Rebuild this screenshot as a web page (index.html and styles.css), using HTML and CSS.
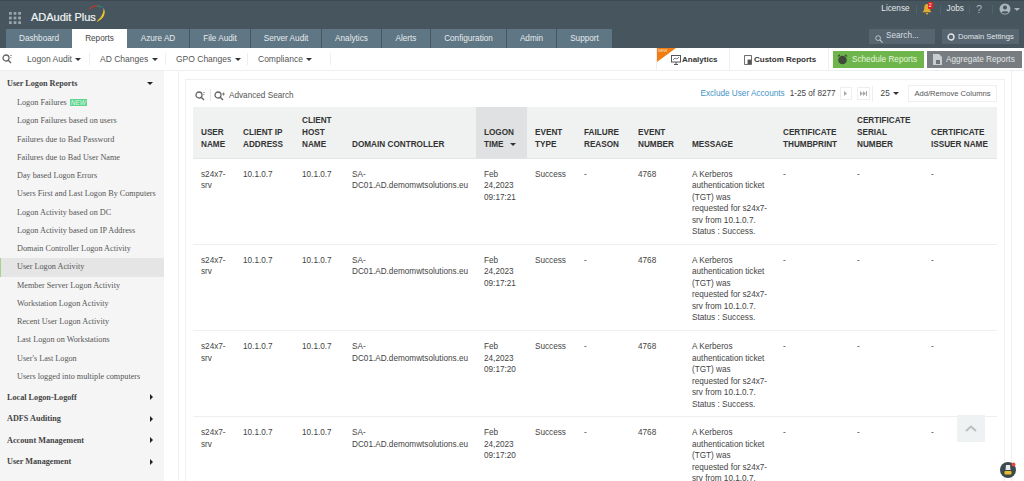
FILE: index.html
```html
<!DOCTYPE html>
<html lang="en">
<head>
<meta charset="utf-8">
<title>ADAudit Plus</title>
<link rel="stylesheet" href="styles.css">
</head>
<body>
<header class="top">
  <div class="brand-row">
    <svg class="grid-ic" width="12" height="12" viewBox="0 0 13 13"><g fill="#9aa5ab"><rect x="0" y="0" width="3" height="3"/><rect x="5" y="0" width="3" height="3"/><rect x="10" y="0" width="3" height="3"/><rect x="0" y="5" width="3" height="3"/><rect x="5" y="5" width="3" height="3"/><rect x="10" y="5" width="3" height="3"/><rect x="0" y="10" width="3" height="3"/><rect x="5" y="10" width="3" height="3"/><rect x="10" y="10" width="3" height="3"/></g></svg>
    <span class="logo">ADAudit Plus</span>
    <svg class="swoosh" width="19" height="18" viewBox="0 0 19 18"><path d="M1 4.500C3 2 6 .8 9 .8" stroke="#c0392b" stroke-width="1.200" fill="none"/><path d="M9 .8C10.500 .8 12 1.200 13 1.800" stroke="#2e8b57" stroke-width="1.200" fill="none"/><path d="M13 1.800C14 2.300 14.500 2.700 15 3.300" stroke="#2a6fb5" stroke-width="1.200" fill="none"/><path d="M15.500 3C19 8 15 15 8 17C12.500 13 15.800 9 15.500 3Z" fill="#eec32b"/></svg>
    <nav class="util">
      <span class="util-item">License</span>
      <span class="util-sep sep-a"></span>
      <span class="bell">
        <svg width="10" height="12" viewBox="0 0 11 13"><path d="M5.500 1C3 1 2.500 3 2.500 5.500C2.500 8 1.500 9 .5 10H10.500C9.500 9 8.500 8 8.500 5.500C8.500 3 8 1 5.500 1ZM4 11H7L5.500 13Z" fill="#e2a92f"/></svg>
        <span class="bell-count">2</span>
      </span>
      <span class="util-sep"></span>
      <span class="util-item">Jobs</span>
      <span class="util-sep sep-b"></span>
      <span class="util-help">?</span>
      <span class="util-sep"></span>
      <svg class="user-ic" width="12" height="12" viewBox="0 0 12 12"><circle cx="6" cy="6" r="5.500" fill="#aab4ba"/><circle cx="6" cy="4.600" r="2" fill="#46555e"/><path d="M2.500 9.500C3 7.800 9 7.800 9.500 9.500C8 11 4 11 2.500 9.500Z" fill="#46555e"/></svg>
      <span class="caret caret-light"></span>
    </nav>
  </div>
  <div class="tab-row">
    <nav class="tabs">
      <a class="tab t-dash">Dashboard</a>
      <a class="tab tab-on t-rep">Reports</a>
      <a class="tab t-az">Azure AD</a>
      <a class="tab t-file">File Audit</a>
      <a class="tab t-srv">Server Audit</a>
      <a class="tab t-an">Analytics</a>
      <a class="tab t-al">Alerts</a>
      <a class="tab t-conf">Configuration</a>
      <a class="tab t-adm">Admin</a>
      <a class="tab t-sup">Support</a>
    </nav>
    <div class="tools">
      <div class="search-box">
        <svg width="8" height="8" viewBox="0 0 9 9"><circle cx="3.500" cy="3.500" r="2.700" stroke="#c5ccd0" fill="none"/><path d="M5.500 5.500L8.500 8.500" stroke="#c5ccd0" stroke-width="1.200"/></svg>
        <span>Search...</span>
      </div>
      <div class="dom-set">
        <svg width="8" height="8" viewBox="0 0 9 9"><circle cx="4.500" cy="4.500" r="3.300" stroke="#e0e4e6" stroke-width="1.600" fill="none"/></svg>
        <span>Domain Settings</span>
      </div>
    </div>
  </div>
</header>

<div class="subnav">
  <svg class="sub-search" width="10" height="10" viewBox="0 0 10 10"><circle cx="4" cy="4" r="3" stroke="#666" stroke-width="1.300" fill="none"/><path d="M6 6L9 9" stroke="#666" stroke-width="1.400"/><path d="M8 1.500H10M8 3.500H9.500" stroke="#888" stroke-width=".7"/></svg>
  <a class="sub-item s1">Logon Audit <span class="caret"></span></a>
  <a class="sub-item s2">AD Changes <span class="caret"></span></a>
  <a class="sub-item s3">GPO Changes <span class="caret"></span></a>
  <a class="sub-item s4">Compliance <span class="caret"></span></a>
  <div class="sub-right">
    <div class="sub-link an-link">
      <span class="new-flag"><span>NEW</span></span>
      <svg width="10" height="10" viewBox="0 0 10 10"><rect x=".5" y=".5" width="9" height="6.500" fill="none" stroke="#555"/><path d="M2 5L4 3L6 4L8 2" stroke="#555" fill="none" stroke-width=".8"/><path d="M3 9.500H7M5 7V9.500" stroke="#555"/></svg>
      <span>Analytics</span>
    </div>
    <div class="sub-link cr-link">
      <svg width="8" height="10" viewBox="0 0 9 11"><path d="M.5.5H8.500V10.500H.5Z" fill="none" stroke="#555"/><rect x="4" y="5" width="4" height="5" fill="#555"/></svg>
      <span>Custom Reports</span>
    </div>
    <a class="act act-green">
      <svg width="11" height="11" viewBox="0 0 11 11"><circle cx="5.500" cy="6" r="4.300" fill="#3f4a3a"/><path d="M1 2.500L3 .8M10 2.500L8 .8" stroke="#3f4a3a" stroke-width="1.300"/></svg>
      <span>Schedule Reports</span>
    </a>
    <a class="act act-gray">
      <svg width="9" height="11" viewBox="0 0 9 11"><path d="M0 0H6L9 3V11H0Z" fill="#c8cdd0"/><rect x="3" y="6" width="4" height="4" fill="#6e7478"/></svg>
      <span>Aggregate Reports</span>
    </a>
  </div>
</div>

<div class="body-wrap">
  <aside class="side">
    <div class="grp grp-open"><span>User Logon Reports</span><span class="caret caret-dark"></span></div>
    <ul class="side-list">
      <li>Logon Failures <span class="new-tag">NEW</span></li>
      <li>Logon Failures based on users</li>
      <li>Failures due to Bad Password</li>
      <li>Failures due to Bad User Name</li>
      <li>Day based Logon Errors</li>
      <li>Users First and Last Logon By Computers</li>
      <li>Logon Activity based on DC</li>
      <li>Logon Activity based on IP Address</li>
      <li>Domain Controller Logon Activity</li>
      <li class="side-on">User Logon Activity</li>
      <li>Member Server Logon Activity</li>
      <li>Workstation Logon Activity</li>
      <li>Recent User Logon Activity</li>
      <li>Last Logon on Workstations</li>
      <li>User's Last Logon</li>
      <li>Users logged into multiple computers</li>
    </ul>
    <div class="grp"><span>Local Logon-Logoff</span><span class="caret-r"></span></div>
    <div class="grp"><span>ADFS Auditing</span><span class="caret-r"></span></div>
    <div class="grp"><span>Account Management</span><span class="caret-r"></span></div>
    <div class="grp"><span>User Management</span><span class="caret-r"></span></div>
  </aside>

  <main class="main">
    <section class="panel">
      <div class="toolbar">
        <svg class="tb-q" width="10" height="10" viewBox="0 0 10 10"><circle cx="4" cy="4" r="3" stroke="#666" stroke-width="1.300" fill="none"/><path d="M6 6L9 9" stroke="#666" stroke-width="1.400"/><path d="M8 1.500H10M8 3.500H9.500" stroke="#888" stroke-width=".7"/></svg>
        <span class="tb-sep"></span>
        <svg class="tb-adv" width="11" height="10" viewBox="0 0 11 10"><circle cx="4" cy="4" r="3" stroke="#666" stroke-width="1.300" fill="none"/><path d="M6 6L9 9" stroke="#666" stroke-width="1.400"/><path d="M8 3H11M9.500 1.500V4.500" stroke="#666" stroke-width=".8"/></svg>
        <span class="adv-text">Advanced Search</span>
        <div class="tb-right">
          <a class="excl">Exclude User Accounts</a>
          <span class="count">1-25 of 8277</span>
          <span class="pg"><svg width="5" height="5" viewBox="0 0 5 5"><path d="M1 0L4 2.500L1 5Z" fill="#aaa"/></svg></span>
          <span class="pg pg2"><svg width="7" height="5" viewBox="0 0 7 5"><path d="M0 0L3 2.500L0 5ZM3 0L6 2.500L3 5ZM6 0H7V5H6Z" fill="#aaa"/></svg></span>
          <span class="tb-sep2"></span>
          <span class="per">25 <span class="caret"></span></span>
          <a class="addrem">Add/Remove Columns</a>
        </div>
      </div>
      <table class="grid">
        <colgroup>
          <col class="c1"><col class="c2"><col class="c3"><col class="c4"><col class="c5"><col class="c6"><col class="c7"><col class="c8"><col class="c9"><col class="c10"><col class="c11"><col class="c12">
        </colgroup>
        <thead>
          <tr>
            <th>USER NAME</th><th>CLIENT IP ADDRESS</th><th>CLIENT HOST NAME</th><th>DOMAIN CONTROLLER</th>
            <th class="th-sort">LOGON TIME <span class="caret"></span></th>
            <th>EVENT TYPE</th><th>FAILURE REASON</th><th>EVENT NUMBER</th><th>MESSAGE</th>
            <th>CERTIFICATE THUMBPRINT</th><th>CERTIFICATE SERIAL NUMBER</th><th>CERTIFICATE ISSUER NAME</th>
          </tr>
        </thead>
        <tbody>
          <tr><td>s24x7-srv</td><td>10.1.0.7</td><td>10.1.0.7</td><td>SA-DC01.AD.demomwtsolutions.eu</td><td>Feb 24,2023 09:17:21</td><td>Success</td><td>-</td><td>4768</td><td class="msg">A Kerberos authentication ticket (TGT) was requested for s24x7-srv from 10.1.0.7. Status : Success.</td><td>-</td><td>-</td><td>-</td></tr>
          <tr><td>s24x7-srv</td><td>10.1.0.7</td><td>10.1.0.7</td><td>SA-DC01.AD.demomwtsolutions.eu</td><td>Feb 24,2023 09:17:21</td><td>Success</td><td>-</td><td>4768</td><td class="msg">A Kerberos authentication ticket (TGT) was requested for s24x7-srv from 10.1.0.7. Status : Success.</td><td>-</td><td>-</td><td>-</td></tr>
          <tr><td>s24x7-srv</td><td>10.1.0.7</td><td>10.1.0.7</td><td>SA-DC01.AD.demomwtsolutions.eu</td><td>Feb 24,2023 09:17:20</td><td>Success</td><td>-</td><td>4768</td><td class="msg">A Kerberos authentication ticket (TGT) was requested for s24x7-srv from 10.1.0.7. Status : Success.</td><td>-</td><td>-</td><td>-</td></tr>
          <tr><td>s24x7-srv</td><td>10.1.0.7</td><td>10.1.0.7</td><td>SA-DC01.AD.demomwtsolutions.eu</td><td>Feb 24,2023 09:17:20</td><td>Success</td><td>-</td><td>4768</td><td class="msg">A Kerberos authentication ticket (TGT) was requested for s24x7-srv from 10.1.0.7. Status : Success.</td><td>-</td><td>-</td><td>-</td></tr>
        </tbody>
      </table>
    </section>
  </main>
</div>

<button class="to-top" aria-label="Back to top"><svg width="12" height="7" viewBox="0 0 12 7"><path d="M1 6L6 1.500L11 6" stroke="#b9bec1" stroke-width="2" fill="none"/></svg></button>
<div class="chat">
  <svg width="16" height="16" viewBox="0 0 16 16"><circle cx="8" cy="8" r="8" fill="#3c4a50"/><path d="M6 3H10L10.500 8H5.500Z" fill="#e7edef"/><rect x="4.500" y="9" width="7" height="3.500" rx="1" fill="#e9bd2d"/><circle cx="13.500" cy="2.500" r="2" fill="#e8483f"/></svg>
</div>
</body>
</html>
```
FILE: styles.css
```css
* { box-sizing: border-box; }
html, body { margin: 0; padding: 0; height: 481px; overflow: hidden; }
body { font-family: "Liberation Sans", Arial, sans-serif; font-size: 8.2px; color: #444; background: #fff; position: relative; }

/* header */
.top { height: 48px; background: #46555e; border-top: 1px solid #3c4950; color: #fff; }
.brand-row { height: 28px; display: flex; align-items: flex-start; padding-left: 9px; padding-right: 4px; }
.grid-ic { margin: 11px 10px 0 0; flex: none; }
.logo { font-size: 11px; color: #f0f3f4; line-height: 13px; margin-top: 10px; -webkit-text-stroke: .2px #f0f3f4; white-space: nowrap; }
.swoosh { margin-left: -8px; margin-top: 4px; flex: none; }
.util { margin-left: auto; margin-top: 0; display: flex; align-items: center; height: 16px; font-size: 8.2px; color: #e5e9eb; }
.util-item { line-height: 16px; }
.util-sep { width: 1px; height: 9px; background: #52626c; margin: 0 6px 0 7px; }
.util-sep.sep-a { margin: 0 5px 0 6px; }
.util-sep.sep-b { margin: 0 4px 0 5px; }
.bell { position: relative; display: flex; margin-left: 0; margin-right: 1px; }
.bell-count { position: absolute; top: -1px; left: 6px; width: 5px; height: 7px; background: #e02020; color: #fff; font-size: 5px; line-height: 7px; text-align: center; border-radius: 1px; }
.util-help { font-size: 11px; color: #aab4ba; padding: 0 3px 0 2px; }
.user-ic { flex: none; }
.caret { display: inline-block; width: 0; height: 0; border-left: 3px solid transparent; border-right: 3px solid transparent; border-top: 3px solid #333; vertical-align: 1px; margin-left: 1px; }
.caret-light { border-top-color: #aab4ba; margin-left: 3px; margin-right: 0; }
.caret-dark { border-top-color: #222; border-left-width: 3px; border-right-width: 3px; border-top-width: 3.5px; }
.caret-r { width: 0; height: 0; border-top: 3px solid transparent; border-bottom: 3px solid transparent; border-left: 3px solid #222; }

.tab-row { height: 19px; display: flex; justify-content: space-between; padding-left: 6px; padding-right: 5px; }
.tabs { display: flex; gap: 1px; height: 19px; }
.tab { display: block; height: 19px; line-height: 20px; text-align: center; background: #5f7684; color: #e6ebee; font-size: 8.2px; }
.tab-on { background: #fff; color: #444; }
.t-dash { width: 66px; }
.t-rep { width: 55px; margin-left: -1px; margin-right: -1px; }
.t-az { width: 62px; }
.t-file { width: 60px; }
.t-srv { width: 70px; }
.t-an { width: 59px; }
.t-al { width: 48px; }
.t-conf { width: 75px; }
.t-adm { width: 49px; }
.t-sup { width: 55px; }
.tools { display: flex; gap: 7px; height: 15px; }
.search-box { width: 66px; height: 15px; background: #566570; color: #d8dde0; display: flex; align-items: center; gap: 3px; padding-left: 6px; font-size: 8.2px; }
.search-box svg { margin-top: 4px; }
.search-box span { margin-top: -2px; }
.dom-set { width: 77px; height: 15px; background: #566570; color: #e0e4e6; display: flex; align-items: center; gap: 3px; padding-left: 5px; font-size: 7.6px; white-space: nowrap; }
.dom-set span { margin-top: -1px; }
.dom-set svg { margin-top: 1px; flex: none; }

/* subnav */
.subnav { height: 23px; background: #fff; border-bottom: 1px solid #eef0f0; display: flex; align-items: center; padding-left: 2px; font-size: 8.5px; color: #555; }
.sub-search { flex: none; margin-right: 15px; margin-top: -1px; }
.sub-item { white-space: nowrap; border-right: 1px solid #eee; height: 12px; line-height: 12px; padding: 0; margin-right: 10px; }
.s1 { width: 63px; }
.s2 { width: 66px; }
.s3 { width: 72px; }
.s4 { width: 73px; margin-right: 0; }
.sub-right { margin-left: auto; display: flex; align-items: stretch; height: 22px; padding-right: 2px; }
.sub-link { display: flex; align-items: center; gap: 1px; font-weight: 700; color: #333; font-size: 8px; border-left: 1px solid #eee; position: relative; padding-top: 1px; }
.an-link { width: 73px; padding-left: 14px; }
.cr-link { width: 100px; padding-left: 14px; gap: 2px; border-right: 1px solid #eee; }
.new-flag { position: absolute; left: 0; top: 0; width: 0; height: 0; border-top: 14px solid #f07d13; border-right: 19px solid transparent; }
.new-flag span { position: absolute; top: -14px; left: 1px; font-size: 4px; color: #f7e3c9; font-weight: 400; line-height: 6px; }
.act { display: flex; align-items: center; height: 17px; margin-top: 3px; font-size: 8.2px; white-space: nowrap; }
.act span { margin-top: -1px; }
.act svg { flex: none; }
.act-green { width: 91px; background: #6eb64b; margin-left: 4px; padding-left: 4px; gap: 4px; color: #e7f4df; }
.act-gray { width: 95px; background: #767c80; margin-left: 3px; padding-left: 6px; gap: 4px; color: #e3e5e6; }

/* body */
.body-wrap { display: flex; height: 410px; overflow: hidden; }
.side { width: 164px; flex: none; background: #f5f5f5; font-family: "Liberation Serif", "Times New Roman", serif; font-size: 8.2px; color: #555; padding-top: 1.5px; height: 410px; }
.grp { display: flex; justify-content: space-between; align-items: center; height: 21.5px; padding: 0 11px 0 7px; font-weight: 700; color: #444; }
.side-list { list-style: none; margin: 0; padding: 0; }
.side-list li { height: 18.27px; line-height: 18px; padding-left: 17px; white-space: nowrap; }
.side-list .side-on { background: #e5e5e5; border-left: 1px solid #a5d58c; padding-left: 16px; }
.new-tag { display: inline-block; width: 17px; height: 7px; text-align: center; background: #5fd48c; color: #dff7e8; font-family: "Liberation Sans", Arial, sans-serif; font-size: 6.5px; line-height: 7px; margin-left: 1px; font-style: italic; vertical-align: 0; }

.main { margin-left: 14px; width: 834px; flex: none; border-left: 1px solid #f0f0f0; border-right: 1px solid #f0f0f0; padding: 8px 0 0 6px; }
.panel { width: 820px; height: 402px; border: 1px solid #f0f0f0; border-bottom: 0; padding: 0 7px; }

.toolbar { height: 27px; display: flex; align-items: center; font-size: 8.2px; color: #555; }
.tb-q { margin: 4px 0 0 2px; flex: none; }
.tb-sep { width: 1px; height: 12px; background: #e6e6e6; margin: 3px 3px 0 5px; }
.tb-adv { flex: none; margin: 4px 4px 0 0; }
.adv-text { white-space: nowrap; margin-top: 4px; }
.tb-right { margin-left: auto; display: flex; align-items: center; white-space: nowrap; }
.excl { color: #3f94c8; }
.count { margin-left: 5px; color: #444; }
.pg { display: flex; align-items: center; justify-content: center; width: 12px; height: 13px; border: 1px solid #eee; margin-left: 4px; }
.pg2 { width: 13px; margin-left: 5px; }
.tb-sep2 { width: 1px; height: 16px; background: #eee; margin: 0 8px 0 2px; }
.per { color: #444; }
.addrem { display: block; margin-left: 9px; width: 89px; height: 17px; line-height: 15px; text-align: center; border: 1px solid #eee; color: #555; font-size: 7.6px; }

.grid { width: 804px; table-layout: fixed; border-collapse: collapse; font-size: 8.2px; color: #444; }
.c1 { width: 42px; } .c2 { width: 59px; } .c3 { width: 50px; } .c4 { width: 132px; }
.c5 { width: 51px; } .c6 { width: 49px; } .c7 { width: 54px; } .c8 { width: 54px; }
.c9 { width: 91px; } .c10 { width: 74px; } .c11 { width: 74px; } .c12 { width: 74px; }
.grid th { background: #f0f2f2; height: 51px; padding: 0 6px 7px 8px; text-align: left; vertical-align: bottom; font-weight: 700; font-size: 8.2px; line-height: 12px; color: #333; border-bottom: 1px solid #e4e6e6; }
.grid .th-sort { background: #dfe1e2; }
.th-sort .caret { margin-left: 4px; }
.grid td { height: 86.33px; padding: 10px 5px 0 8px; vertical-align: top; line-height: 11.5px; border-bottom: 1px solid #eeeeee; overflow-wrap: break-word; }
.grid .msg { padding-right: 6.5px; }

.to-top { position: absolute; left: 957px; top: 415px; width: 28px; height: 27px; border: 0; background: #eff2f3; padding: 0; display: flex; align-items: center; justify-content: center; }
.chat { position: absolute; left: 1000px; top: 462px; width: 16px; height: 16px; }
.chat svg { display: block; }
```
